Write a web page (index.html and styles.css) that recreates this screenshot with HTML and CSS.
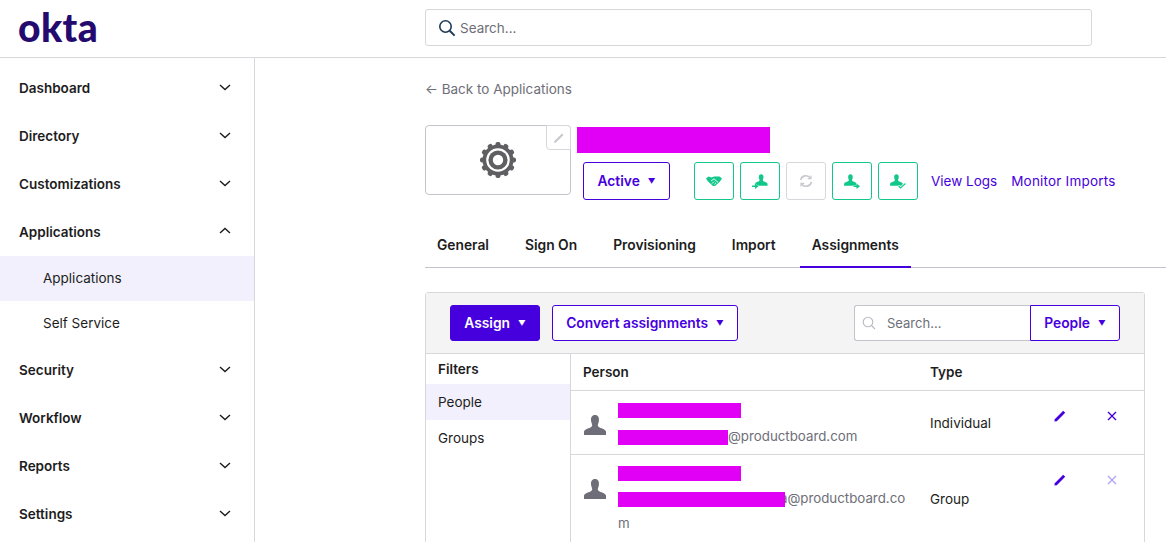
FILE: index.html
```html
<!DOCTYPE html>
<html lang="en">
  <head>
    <meta charset="UTF-8" />
    <meta name="viewport" content="width=device-width, initial-scale=1.0" />
    <title>Okta - Assignments</title>
    <link rel="stylesheet" href="styles.css">
  </head>
  <body>
    <header class="topbar">
      <div class="topbar__logo">okta</div>
      <div class="topbar__search">
        <svg width="18" height="18" viewBox="0 0 18 18" fill="none" stroke="#1f3a52" stroke-width="1.6">
          <circle cx="7.5" cy="7.5" r="5.7" />
          <path d="M11.7 11.7 L16.6 16.6" stroke-width="2" />
        </svg>
        <span>Search...</span>
      </div>
    </header>

    <div class="layout">
      <nav class="sidenav">
        <div class="sidenav__item">Dashboard<svg class="chev" width="12" height="7" viewBox="0 0 12 7"><path d="M1 1 L6 5.5 L11 1" /></svg></div>
        <div class="sidenav__item">Directory<svg class="chev" width="12" height="7" viewBox="0 0 12 7"><path d="M1 1 L6 5.5 L11 1" /></svg></div>
        <div class="sidenav__item">Customizations<svg class="chev" width="12" height="7" viewBox="0 0 12 7"><path d="M1 1 L6 5.5 L11 1" /></svg></div>
        <div class="sidenav__item">Applications<svg class="chev chev--up" width="12" height="7" viewBox="0 0 12 7"><path d="M1 6 L6 1.5 L11 6" /></svg></div>
        <div class="sidenav__sub sidenav__sub--active">Applications</div>
        <div class="sidenav__sub">Self Service</div>
        <div class="sidenav__item">Security<svg class="chev" width="12" height="7" viewBox="0 0 12 7"><path d="M1 1 L6 5.5 L11 1" /></svg></div>
        <div class="sidenav__item">Workflow<svg class="chev" width="12" height="7" viewBox="0 0 12 7"><path d="M1 1 L6 5.5 L11 1" /></svg></div>
        <div class="sidenav__item">Reports<svg class="chev" width="12" height="7" viewBox="0 0 12 7"><path d="M1 1 L6 5.5 L11 1" /></svg></div>
        <div class="sidenav__item">Settings<svg class="chev" width="12" height="7" viewBox="0 0 12 7"><path d="M1 1 L6 5.5 L11 1" /></svg></div>
      </nav>

      <main class="content">
        <div class="back-link">← Back to Applications</div>

        <section class="app-head">
          <div class="app-logo">
            <svg width="38" height="38" viewBox="0 0 38 38">
              <g fill="#5f5f63">
                <circle cx="19" cy="19" r="15.5" />
                <rect x="16.5" y="1" width="5" height="36" rx="2" />
                <rect x="16.5" y="1" width="5" height="36" rx="2" transform="rotate(30 19 19)" />
                <rect x="16.5" y="1" width="5" height="36" rx="2" transform="rotate(60 19 19)" />
                <rect x="16.5" y="1" width="5" height="36" rx="2" transform="rotate(90 19 19)" />
                <rect x="16.5" y="1" width="5" height="36" rx="2" transform="rotate(120 19 19)" />
                <rect x="16.5" y="1" width="5" height="36" rx="2" transform="rotate(150 19 19)" />
              </g>
              <circle cx="19" cy="19" r="11.8" fill="#fff" />
              <circle cx="19" cy="19" r="9.6" fill="#5f5f63" />
              <circle cx="19" cy="19" r="5.2" fill="#fff" />
            </svg>
            <span class="app-logo__edit">
              <svg width="12" height="12" viewBox="0 0 12 12"><path d="M1 11 L1.4 9 L9 1.4 L10.6 3 L3 10.6 Z" fill="#c9c8d0" /></svg>
            </span>
          </div>
          <div class="app-head__main">
            <div class="redact redact--title"></div>
            <div class="app-actions">
              <button class="btn btn--outline btn--status">Active<span class="caret">▼</span></button>
              <div class="icon-btns">
                <span class="icon-btn">
                  <svg width="16" height="10" viewBox="0 0 16 10" fill="#12c78a"><path d="M0 2.5 L2.5 0.5 L5.5 1.5 L8 0.5 L11 0.5 L13.5 0.5 L16 2.5 L14 5.5 L9 10 L7 10 L2 5.5 Z" /><path d="M5 5 L8 2.8 L12 6.4 M6 7.6 L8 5.6 M8.4 8.4 L10 6.8" stroke="#fff" stroke-width="0.9" fill="none" /></svg>
                </span>
                <span class="icon-btn">
                  <svg width="16" height="15" viewBox="0 0 16 15" fill="#12c78a"><path transform="translate(2.2 -1) scale(0.58)" d="M12 2 C15 2 16.4 4.4 15.9 8 C15.6 10 14.8 11.2 14.8 12.6 C14.8 15 21.6 15.6 23 18.4 V22 H1 V18.4 C2.4 15.6 9.2 15 9.2 12.6 C9.2 11.2 8.4 10 8.1 8 C7.6 4.4 9 2 12 2 Z" /><path d="M0 11.5 H3 V9.5 L6.5 12.2 L3 15 V13 H0 Z" stroke="#fff" stroke-width="0.6" paint-order="stroke" /></svg>
                </span>
                <span class="icon-btn icon-btn--off">
                  <svg width="14" height="14" viewBox="0 0 14 14" fill="none" stroke="#c9c8cf" stroke-width="1.6"><path d="M1.6 6 A5.5 5.5 0 0 1 11.4 4 M12.4 8 A5.5 5.5 0 0 1 2.6 10" /><path d="M12 1.4 V4.6 H8.8 M2 12.6 V9.4 H5.2" stroke-width="1.2" /></svg>
                </span>
                <span class="icon-btn">
                  <svg width="16" height="15" viewBox="0 0 16 15" fill="#12c78a"><path transform="translate(-0.5 -1) scale(0.58)" d="M12 2 C15 2 16.4 4.4 15.9 8 C15.6 10 14.8 11.2 14.8 12.6 C14.8 15 21.6 15.6 23 18.4 V22 H1 V18.4 C2.4 15.6 9.2 15 9.2 12.6 C9.2 11.2 8.4 10 8.1 8 C7.6 4.4 9 2 12 2 Z" /><path d="M9.5 11.5 H12.5 V9.5 L16 12.2 L12.5 15 V13 H9.5 Z" stroke="#fff" stroke-width="0.6" paint-order="stroke" /></svg>
                </span>
                <span class="icon-btn">
                  <svg width="16" height="15" viewBox="0 0 16 15" fill="#12c78a"><path transform="translate(-0.5 -1) scale(0.58)" d="M12 2 C15 2 16.4 4.4 15.9 8 C15.6 10 14.8 11.2 14.8 12.6 C14.8 15 21.6 15.6 23 18.4 V22 H1 V18.4 C2.4 15.6 9.2 15 9.2 12.6 C9.2 11.2 8.4 10 8.1 8 C7.6 4.4 9 2 12 2 Z" /><path d="M8 12 L10.5 14.5 L15.5 9.5" fill="none" stroke="#fff" stroke-width="3" /><path d="M8.6 12 L10.5 14 L15.5 9.5" fill="none" stroke="#12c78a" stroke-width="1.1" /></svg>
                </span>
              </div>
              <a class="link link--first">View Logs</a>
              <a class="link link--wide">Monitor Imports</a>
            </div>
          </div>
        </section>

        <div class="tabs">
          <div class="tab">General</div>
          <div class="tab">Sign On</div>
          <div class="tab">Provisioning</div>
          <div class="tab">Import</div>
          <div class="tab tab--active">Assignments</div>
        </div>

        <section class="panel">
          <div class="panel__toolbar">
            <button class="btn btn--solid">Assign<span class="caret">▼</span></button>
            <button class="btn btn--outline btn--convert">Convert assignments<span class="caret">▼</span></button>
            <div class="panel__search">
              <div class="search-field">
                <svg width="14" height="14" viewBox="0 0 14 14" fill="none" stroke="#b9b8c2" stroke-width="1.1"><circle cx="6" cy="6" r="4.8" /><path d="M9.5 9.5 L13 13" /></svg>
                <span>Search...</span>
              </div>
              <button class="btn btn--outline btn--people">People<span class="caret">▼</span></button>
            </div>
          </div>

          <div class="panel__body">
            <aside class="filters">
              <div class="filters__title">Filters</div>
              <div class="filters__item filters__item--active">People</div>
              <div class="filters__item">Groups</div>
            </aside>

            <div class="table">
              <div class="row row--head">
                <div class="cell-person">Person</div>
                <div class="cell-type">Type</div>
              </div>

              <div class="row">
                <div class="cell-person cell-person--stack">
                  <svg class="avatar" width="24" height="24" viewBox="0 0 24 24"><path d="M12 2 C15 2 16.4 4.4 15.9 8 C15.6 10 14.8 11.2 14.8 12.6 C14.8 15 21.6 15.6 23 18.4 V22 H1 V18.4 C2.4 15.6 9.2 15 9.2 12.6 C9.2 11.2 8.4 10 8.1 8 C7.6 4.4 9 2 12 2 Z" /></svg>
                  <div class="person">
                    <div class="person__line"><span class="redact redact--name"></span></div>
                    <div class="person__line person__line--mail"><span class="redact redact--mail"></span>@productboard.com</div>
                  </div>
                </div>
                <div class="cell-type">Individual</div>
                <div class="row__actions">
                  <svg width="12" height="12" viewBox="0 0 12 12"><path d="M0.4 11.6 L0.8 9.2 L9.2 0.8 L11.2 2.8 L2.8 11.2 Z" fill="#4600de" /></svg>
                  <svg width="10" height="10" viewBox="0 0 10 10"><path d="M1 1 L9 9 M9 1 L1 9" stroke="#4600de" stroke-width="1.4" /></svg>
                </div>
              </div>

              <div class="row">
                <div class="cell-person cell-person--stack">
                  <svg class="avatar" width="24" height="24" viewBox="0 0 24 24"><path d="M12 2 C15 2 16.4 4.4 15.9 8 C15.6 10 14.8 11.2 14.8 12.6 C14.8 15 21.6 15.6 23 18.4 V22 H1 V18.4 C2.4 15.6 9.2 15 9.2 12.6 C9.2 11.2 8.4 10 8.1 8 C7.6 4.4 9 2 12 2 Z" /></svg>
                  <div class="person person--tall">
                    <div class="person__line"><span class="redact redact--name"></span></div>
                    <div class="person__line"><span class="redact redact--mail-long"></span><span class="person__tail">a</span>@productboard.com</div>
                  </div>
                </div>
                <div class="cell-type">Group</div>
                <div class="row__actions">
                  <svg width="12" height="12" viewBox="0 0 12 12"><path d="M0.4 11.6 L0.8 9.2 L9.2 0.8 L11.2 2.8 L2.8 11.2 Z" fill="#4600de" /></svg>
                  <svg width="10" height="10" viewBox="0 0 10 10"><path d="M1 1 L9 9 M9 1 L1 9" stroke="#b5a5f2" stroke-width="1.4" /></svg>
                </div>
              </div>
            </div>
          </div>
        </section>
      </main>
    </div>
  </body>
</html>
```

FILE: styles.css
```css
* {
  margin: 0;
  padding: 0;
  box-sizing: border-box;
}

html,
body {
  height: 542px;
  overflow: hidden;
}

body {
  font-family: "Inter", "Liberation Sans", sans-serif;
  font-size: 13.5px;
  color: #1d1d21;
  background-color: #fff;
}

.topbar {
  display: flex;
  align-items: center;
  height: 58px;
  border-bottom: 1px solid #d7d7dc;
}

.topbar__logo {
  width: 425px;
  padding-left: 18px;
  font-family: "Lato", sans-serif;
  font-weight: 900;
  font-size: 39px;
  letter-spacing: 0.4px;
  color: #24096f;
  line-height: 1;
  margin-top: -2px;
}

.topbar__search {
  display: flex;
  align-items: center;
  gap: 4px;
  width: 667px;
  height: 37px;
  margin-top: -2px;
  padding-left: 12px;
  border: 1px solid #d7d7dc;
  border-radius: 3px;
  color: #6e6e78;
}

.layout {
  display: flex;
}

.sidenav {
  width: 255px;
  height: 484px;
  padding-top: 6px;
  border-right: 1px solid #d7d7dc;
}

.sidenav__item {
  display: flex;
  justify-content: space-between;
  align-items: center;
  height: 48px;
  padding: 0 23px 0 19px;
  font-weight: 600;
}

.chev {
  fill: none;
  stroke: #1d1d21;
  stroke-width: 1.4;
  margin-top: -1px;
}

.chev--up {
  margin-top: -3px;
}

.sidenav__sub {
  height: 45px;
  line-height: 45px;
  padding-left: 43px;
  color: #1d1d21;
}

.sidenav__sub--active {
  background-color: #f1f0fc;
}

.content {
  flex: 1;
  padding: 22px 0 0 170px;
}

.back-link {
  color: #6e6e78;
  line-height: 18px;
}

.app-head {
  display: flex;
  margin-top: 27px;
}

.app-logo {
  position: relative;
  display: flex;
  justify-content: center;
  align-items: center;
  width: 146px;
  height: 70px;
  border: 1px solid #c4c3cc;
  border-radius: 4px;
}

.app-logo__edit {
  position: absolute;
  top: -1px;
  right: -1px;
  display: flex;
  justify-content: center;
  align-items: center;
  width: 25px;
  height: 25px;
  border: 1px solid #d7d7dc;
  border-radius: 0 4px 0 4px;
  background-color: #fff;
}

.app-head__main {
  padding-left: 6px;
  padding-top: 2px;
}

.redact {
  display: inline-block;
  background-color: #e100f5;
}

.redact--title {
  display: block;
  width: 193px;
  height: 26px;
}

.redact--name {
  width: 123px;
  height: 15px;
  vertical-align: middle;
}

.redact--mail {
  width: 110px;
  height: 15px;
  vertical-align: middle;
}

.redact--mail-long {
  position: relative;
  z-index: 1;
  width: 167px;
  height: 15px;
  vertical-align: middle;
}

.app-actions {
  display: flex;
  align-items: center;
  margin-top: 9px;
  margin-left: 6px;
}

.btn {
  display: inline-flex;
  justify-content: center;
  align-items: center;
  height: 36px;
  font-family: inherit;
  font-size: 13.8px;
  font-weight: 600;
  border-radius: 3px;
}

.btn--outline {
  border: 1px solid #4600de;
  background-color: #fff;
  color: #4600de;
}

.btn--solid {
  width: 90px;
  border: 1px solid #4600de;
  background-color: #4600de;
  color: #fff;
}

.btn--status {
  width: 87px;
  height: 38px;
}

.caret {
  margin-left: 8px;
  font-size: 7.5px;
}

.icon-btns {
  display: flex;
  gap: 6px;
  margin-left: 24px;
}

.icon-btn {
  display: flex;
  justify-content: center;
  align-items: center;
  width: 40px;
  height: 38px;
  border: 1px solid #12c78a;
  border-radius: 3px;
}

.icon-btn--off {
  border-color: #d7d7dc;
}

.link {
  margin-left: 14px;
  color: #4600de;
}

.link--first {
  margin-left: 13px;
}

.link--wide {
  letter-spacing: 0.2px;
}

.tabs {
  display: flex;
  height: 44px;
  margin-top: 24px;
  border-bottom: 1px solid #c4c3cc;
}

.tab {
  height: 44px;
  padding: 0 12px;
  line-height: 43px;
  margin-right: 12px;
  font-size: 13.8px;
  font-weight: 600;
}

.tab--active {
  margin-right: 0;
  border-bottom: 2px solid #4600de;
}

.panel {
  width: 720px;
  margin-top: 24px;
  border: 1px solid #d7d7dc;
  border-radius: 3px 3px 0 0;
}

.panel__toolbar {
  display: flex;
  align-items: center;
  height: 61px;
  padding: 0 24px;
  background-color: #f4f4f4;
  border-bottom: 1px solid #d7d7dc;
}

.btn--convert {
  width: 186px;
  margin-left: 12px;
}

.panel__search {
  display: flex;
  margin-left: auto;
}

.search-field {
  display: flex;
  align-items: center;
  gap: 11px;
  width: 176px;
  height: 36px;
  padding-left: 7px;
  border: 1px solid #c4c3cc;
  border-right: none;
  border-radius: 3px 0 0 3px;
  background-color: #fff;
  color: #6e6e78;
  font-size: 13px;
}

.btn--people {
  width: 90px;
  border-radius: 0 3px 3px 0;
}

.panel__body {
  display: flex;
}

.filters {
  width: 145px;
  border-right: 1px solid #d7d7dc;
}

.filters__title {
  height: 30px;
  line-height: 30px;
  padding-left: 12px;
  font-weight: 600;
}

.filters__item {
  height: 36px;
  line-height: 36px;
  padding-left: 12px;
}

.filters__item--active {
  background-color: #f1f0fc;
}

.table {
  flex: 1;
}

.row {
  position: relative;
  display: flex;
  align-items: center;
  min-height: 64px;
  padding-left: 12px;
  border-bottom: 1px solid #d7d7dc;
}

.row--head {
  min-height: 37px;
  font-weight: 600;
}

.cell-person {
  display: flex;
  width: 347px;
}

.avatar {
  flex-shrink: 0;
  fill: #6e6e78;
  margin-top: 22px;
  margin-right: 11px;
}

.person {
  width: 288px;
  padding: 6px 0 5px;
  color: #6e6e78;
  font-size: 13.3px;
  line-height: 25px;
  word-break: break-all;
}

.person--tall {
  padding: 5px 0 6px;
}

.person__line {
  min-height: 26px;
}

.person__line--mail {
  padding-top: 1px;
}

.person__tail {
  margin-left: -5px;
}

.row__actions {
  position: absolute;
  top: 19px;
  left: 483px;
  display: flex;
  align-items: center;
  gap: 41px;
}
```
